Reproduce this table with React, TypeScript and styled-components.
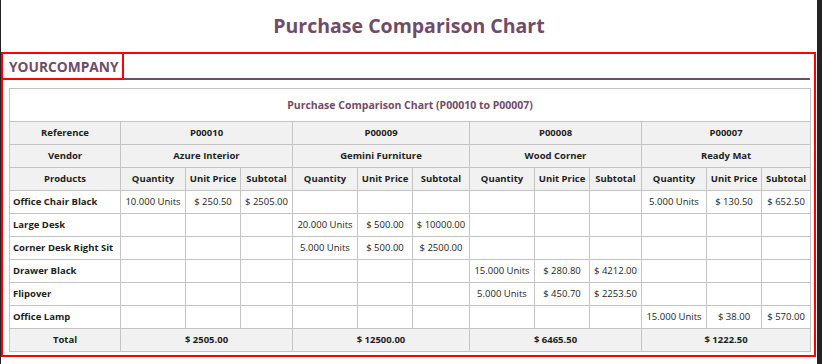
import React from "react";
import styled, { createGlobalStyle } from "styled-components";

const GlobalStyle = createGlobalStyle`
  html, body { margin: 0; padding: 0; background: #ffffff; }
  body { font-family: "Open Sans", "Noto Sans", sans-serif; color: #212529; }
`;

const PURPLE = "#714B67";
const GRID = "#c4c4c4";

const Frame = styled.div`
  display: flex;
  width: 822px;
  height: 364px;
  overflow: hidden;
`;

const Edge = styled.div<{ $w: number }>`
  flex: 0 0 ${(p) => p.$w}px;
  background: #222222;
`;

const Main = styled.div`
  flex: 1;
  display: flex;
  flex-direction: column;
  min-width: 0;
`;

const PageTitle = styled.h1`
  margin: 0;
  height: 52px;
  display: flex;
  align-items: center;
  justify-content: center;
  font-size: 19.5px;
  font-weight: 700;
  color: ${PURPLE};
  padding-bottom: 2px;
  box-sizing: border-box;
`;

const Section = styled.section`
  border: 2px solid #ff0000;
  margin-right: 1px;
  padding: 0 4px 3px 0;
  display: flex;
  flex-direction: column;
`;

const Header = styled.div`
  display: flex;
  border-bottom: 2px solid ${PURPLE};
`;

const CompanyBox = styled.div`
  border-right: 2px solid #ff0000;
  border-bottom: 2px solid #ff0000;
  margin-bottom: -2px;
  height: 24px;
  width: 113px;
  padding-left: 6px;
  display: flex;
  align-items: center;
  font-size: 13.75px;
  font-weight: 700;
  color: ${PURPLE};
`;

const TableWrap = styled.div`
  margin: 8px 0 0 6px;
`;

const Grid = styled.table`
  width: 801px;
  table-layout: fixed;
  border-collapse: collapse;
  font-size: 9.5px;
`;

const Cell = styled.td<{ $head?: boolean; $left?: boolean; $bold?: boolean }>`
  border: 1px solid ${GRID};
  padding: 0 3px;
  height: 22px;
  line-height: 22px;
  white-space: nowrap;
  overflow: hidden;
  text-align: ${(p) => (p.$left ? "left" : "center")};
  font-weight: ${(p) => (p.$head || p.$bold ? 700 : 400)};
  background: ${(p) => (p.$head ? "#f1f1f1" : "#ffffff")};
  color: #1d1d1d;
`;

const TitleCell = styled.td`
  border: 1px solid ${GRID};
  height: 32px;
  line-height: 32px;
  padding: 0;
  text-align: center;
  font-size: 10.5px;
  font-weight: 700;
  color: ${PURPLE};
`;

const widths = [111, 65, 55, 52, 65, 55, 57, 65, 55, 52, 65, 55, 49];

type Order = { ref: string; vendor: string; total: string };
const orders: Order[] = [
  { ref: "P00010", vendor: "Azure Interior", total: "$ 2505.00" },
  { ref: "P00009", vendor: "Gemini Furniture", total: "$ 12500.00" },
  { ref: "P00008", vendor: "Wood Corner", total: "$ 6465.50" },
  { ref: "P00007", vendor: "Ready Mat", total: "$ 1222.50" },
];

type Line = [string, string, string] | null;
type Product = { name: string; lines: Line[] };

const products: Product[] = [
  { name: "Office Chair Black", lines: [["10.000 Units", "$ 250.50", "$ 2505.00"], null, null, ["5.000 Units", "$ 130.50", "$ 652.50"]] },
  { name: "Large Desk", lines: [null, ["20.000 Units", "$ 500.00", "$ 10000.00"], null, null] },
  { name: "Corner Desk Right Sit", lines: [null, ["5.000 Units", "$ 500.00", "$ 2500.00"], null, null] },
  { name: "Drawer Black", lines: [null, null, ["15.000 Units", "$ 280.80", "$ 4212.00"], null] },
  { name: "Flipover", lines: [null, null, ["5.000 Units", "$ 450.70", "$ 2253.50"], null] },
  { name: "Office Lamp", lines: [null, null, null, ["15.000 Units", "$ 38.00", "$ 570.00"]] },
];

export default function App() {
  return (
    <>
      <GlobalStyle />
      <Frame>
        <Edge $w={1} />
        <Main>
          <PageTitle>Purchase Comparison Chart</PageTitle>
          <Section>
            <Header>
              <CompanyBox>YOURCOMPANY</CompanyBox>
            </Header>
            <TableWrap>
              <Grid>
                <colgroup>
                  {widths.map((w, i) => (
                    <col key={i} style={{ width: w }} />
                  ))}
                </colgroup>
                <tbody>
                  <tr>
                    <TitleCell colSpan={13}>Purchase Comparison Chart (P00010 to P00007)</TitleCell>
                  </tr>
                  <tr>
                    <Cell $head>Reference</Cell>
                    {orders.map((o) => (
                      <Cell $head colSpan={3} key={o.ref}>{o.ref}</Cell>
                    ))}
                  </tr>
                  <tr>
                    <Cell $head>Vendor</Cell>
                    {orders.map((o) => (
                      <Cell $head colSpan={3} key={o.ref}>{o.vendor}</Cell>
                    ))}
                  </tr>
                  <tr>
                    <Cell $head>Products</Cell>
                    {orders.map((o) => (
                      <React.Fragment key={o.ref}>
                        <Cell $head>Quantity</Cell>
                        <Cell $head>Unit Price</Cell>
                        <Cell $head>Subtotal</Cell>
                      </React.Fragment>
                    ))}
                  </tr>
                  {products.map((p) => (
                    <tr key={p.name}>
                      <Cell $left $bold>{p.name}</Cell>
                      {p.lines.map((l, i) => (
                        <React.Fragment key={i}>
                          <Cell>{l ? l[0] : ""}</Cell>
                          <Cell>{l ? l[1] : ""}</Cell>
                          <Cell>{l ? l[2] : ""}</Cell>
                        </React.Fragment>
                      ))}
                    </tr>
                  ))}
                  <tr>
                    <Cell $head>Total</Cell>
                    {orders.map((o) => (
                      <Cell $head colSpan={3} key={o.ref}>{o.total}</Cell>
                    ))}
                  </tr>
                </tbody>
              </Grid>
            </TableWrap>
          </Section>
        </Main>
        <Edge $w={5} />
      </Frame>
    </>
  );
}
